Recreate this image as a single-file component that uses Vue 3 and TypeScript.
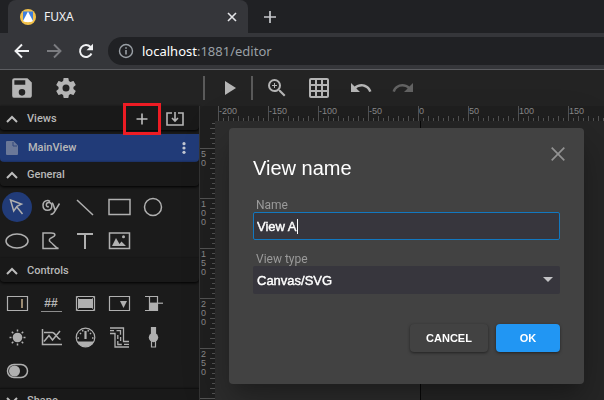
<script setup lang="ts">
import { computed, onBeforeUnmount, onMounted, ref } from 'vue'

interface Tick { pos: number; size: number; label?: string }

const viewName = ref('View A')
const viewType = ref('Canvas/SVG')
const width = ref(window.innerWidth)
const height = ref(window.innerHeight)

function measure(): void {
  width.value = window.innerWidth
  height.value = window.innerHeight
}
onMounted(() => window.addEventListener('resize', measure))
onBeforeUnmount(() => window.removeEventListener('resize', measure))

// One tick every 5 units, a labelled one every 50 where the label has room.
function makeTicks(start: number, firstValue: number, firstIndex: number, length: number): Tick[] {
  const ticks: Tick[] = []
  for (let i = firstIndex; start + i * 5 < length; i++) {
    const major = i % 10 === 0
    const pos = start + i * 5
    ticks.push({
      pos,
      size: major ? 15 : i % 2 === 0 ? 5 : 3,
      label: major && pos + 28 < length ? String(firstValue + i * 5) : undefined,
    })
  }
  return ticks
}

const xTicks = computed(() => makeTicks(18, -200, 0, width.value - 200))
const yTicks = computed(() => makeTicks(27, 50, -5, height.value - 121))
</script>

<template>
  <div class="window">
    <header class="browser">
      <div class="tabs">
        <div class="tab">
          <svg class="favicon" viewBox="0 0 16 16"><circle cx="8" cy="8" r="8" fill="#f2c14a" /><path d="M3 2.5h10v9.5H3z" fill="#3f7fdc" /><path d="M8 2.5 13 12c-2 1.600-8 1.600-10 0z" fill="#fff" /></svg>
          <span class="tab-title">FUXA</span>
          <button class="bare" aria-label="Close tab"><svg width="10" height="10" viewBox="0 0 10 10"><path d="M1 1l8 8M9 1L1 9" stroke="#e4e5e8" stroke-width="1.600" /></svg></button>
        </div>
        <button class="bare new-tab" aria-label="New tab"><svg width="12" height="12" viewBox="0 0 12 12"><path d="M6 0v12M0 6h12" stroke="#c6c8cc" stroke-width="1.700" /></svg></button>
      </div>
      <div class="nav">
        <button class="bare" aria-label="Back"><svg width="16" height="16" viewBox="0 0 16 16"><path d="M15 8H2M8 1.500 1.500 8 8 14.500" fill="none" stroke="#f0f1f3" stroke-width="1.900" /></svg></button>
        <button class="bare" aria-label="Forward"><svg width="16" height="16" viewBox="0 0 16 16"><path d="M1 8h13M8 1.500 14.500 8 8 14.500" fill="none" stroke="#7b7c80" stroke-width="1.900" /></svg></button>
        <button class="bare" aria-label="Reload"><svg width="16" height="16" viewBox="0 0 16 16"><path d="M13.500 10.500A6 6 0 1 1 12.500 4" fill="none" stroke="#f0f1f3" stroke-width="1.900" /><path d="M15 .8v6.500H8.500z" fill="#f0f1f3" /></svg></button>
        <div class="omnibox">
          <svg width="16" height="16" viewBox="0 0 16 16"><circle cx="8" cy="8" r="6.500" fill="none" stroke="#9aa0a6" stroke-width="1.400" /><path d="M8 7v4.500M8 4.200v1.600" stroke="#9aa0a6" stroke-width="1.600" /></svg>
          <span class="url"><b>localhost</b>:1881/editor</span>
        </div>
      </div>
    </header>

    <div class="toolbar">
      <div class="file-actions">
        <button class="bare" aria-label="Save"><svg class="big" viewBox="1 1 22 22"><path d="M17 3H5a2 2 0 0 0-2 2v14a2 2 0 0 0 2 2h14c1.100 0 2-.9 2-2V7l-4-4zm-5 16a3 3 0 1 1 0-6 3 3 0 0 1 0 6zm3-10H5V5h10v4z" /></svg></button>
        <button class="bare" aria-label="Settings"><svg class="big" viewBox="0 0 24 24"><path d="M19.430 12.980c.04-.32.07-.64.07-.98s-.03-.66-.07-.98l2.110-1.650c.19-.15.24-.42.120-.64l-2-3.460c-.12-.22-.39-.3-.61-.22l-2.490 1c-.52-.4-1.080-.73-1.690-.98l-.38-2.650A.49.49 0 0 0 14 2h-4c-.25 0-.46.18-.49.42l-.38 2.650c-.61.25-1.170.59-1.690.98l-2.490-1c-.23-.09-.49 0-.61.22l-2 3.460c-.13.22-.07.49.12.64l2.110 1.650c-.04.32-.07.65-.07.98s.03.66.07.98l-2.110 1.650c-.19.15-.24.42-.12.64l2 3.460c.12.22.39.3.61.22l2.490-1c.52.4 1.080.73 1.690.98l.38 2.650c.03.24.24.42.49.42h4c.25 0 .46-.18.49-.42l.38-2.650c.61-.25 1.170-.59 1.690-.98l2.490 1c.23.09.49 0 .61-.22l2-3.460c.12-.22.07-.49-.12-.64l-2.110-1.650zM12 15.500a3.500 3.500 0 1 1 0-7 3.500 3.500 0 0 1 0 7z" /></svg></button>
      </div>
      <i class="divider"></i>
      <button class="bare play" aria-label="Launch"><svg class="big" viewBox="0 0 24 24"><path d="M8 5v14l11-7z" /></svg></button>
      <i class="divider"></i>
      <div class="edit-actions">
        <button class="bare" aria-label="Zoom"><svg class="big" viewBox="0 0 24 24"><path d="M15.500 14h-.79l-.28-.27A6.470 6.470 0 0 0 16 9.500 6.500 6.500 0 1 0 9.500 16c1.610 0 3.090-.59 4.230-1.570l.27.28v.79l5 4.990L20.490 19l-4.990-5zm-6 0a4.500 4.500 0 1 1 0-9 4.500 4.500 0 0 1 0 9zm2.500-4h-2v2H9v-2H7V9h2V7h1v2h2v1z" /></svg></button>
        <button class="bare" aria-label="Grid"><svg class="big" viewBox="0 0 24 24"><path d="M20 2H4a2 2 0 0 0-2 2v16c0 1.100.9 2 2 2h16c1.100 0 2-.9 2-2V4a2 2 0 0 0-2-2zM8 20H4v-4h4v4zm0-6H4v-4h4v4zm0-6H4V4h4v4zm6 12h-4v-4h4v4zm0-6h-4v-4h4v4zm0-6h-4V4h4v4zm6 12h-4v-4h4v4zm0-6h-4v-4h4v4zm0-6h-4V4h4v4z" /></svg></button>
        <button class="bare" aria-label="Undo"><svg class="big" viewBox="0 0 24 24"><path d="M12.500 8c-2.650 0-5.050.99-6.900 2.600L2 7v9h9l-3.620-3.620c1.390-1.160 3.160-1.880 5.120-1.880 3.540 0 6.550 2.310 7.600 5.500l2.370-.78C21.080 11.030 17.150 8 12.500 8z" /></svg></button>
        <button class="bare faded" aria-label="Redo"><svg class="big" viewBox="0 0 24 24"><path d="M18.400 10.600C16.550 8.990 14.150 8 11.500 8c-4.650 0-8.580 3.030-9.960 7.220L3.900 16a8 8 0 0 1 7.600-5.500c1.950 0 3.730.72 5.120 1.880L13 16h9V7l-3.600 3.600z" /></svg></button>
      </div>
    </div>

    <div class="workspace">
      <aside class="sidebar">
        <div class="section">
          <svg class="chevron" viewBox="0 0 12 8"><path d="M1 7l5-5 5 5" /></svg>
          <span>Views</span>
          <div class="section-actions">
            <button class="bare add-view" aria-label="Add view"><svg width="12" height="12" viewBox="0 0 12 12"><path d="M6 .5v11M.5 6h11" stroke="#bdbdbd" stroke-width="1.600" /></svg></button>
            <button class="bare" aria-label="Import view"><svg width="18" height="14" viewBox="0 0 18 14"><path d="M6 1H1v12h16V1h-5M9 0v8M6 6l3 3 3-3" fill="none" stroke="#b5b5b5" stroke-width="1.600" /></svg></button>
          </div>
        </div>
        <div class="view-row">
          <svg width="12" height="14" viewBox="0 0 12 14"><path d="M1 0h6.500L12 4.500V13a1 1 0 0 1-1 1H1a1 1 0 0 1-1-1V1a1 1 0 0 1 1-1z" fill="#6b7898" /><path d="M7 1v4h4" fill="none" stroke="#32477a" /></svg>
          <span>MainView</span>
          <button class="bare more" aria-label="View menu"><svg width="4" height="12" viewBox="0 0 4 12"><circle cx="2" cy="1.700" r="1.600" /><circle cx="2" cy="6" r="1.600" /><circle cx="2" cy="10.300" r="1.600" /></svg></button>
        </div>

        <div class="section">
          <svg class="chevron" viewBox="0 0 12 8"><path d="M1 7l5-5 5 5" /></svg>
          <span>General</span>
        </div>
        <div class="tools">
          <button class="bare" aria-label="Select"><svg viewBox="0 0 34 34"><circle cx="17" cy="17" r="15" fill="#213b78" stroke="none" /><path d="M10.500 10l11 4-4.500 2.300L13.700 21zM16.500 16.500l6 7.500" /></svg></button>
          <button class="bare" aria-label="Pencil"><svg viewBox="0 0 34 34"><path d="M16 11.500c-2-2-7-1-7 3.700 0 3 1.500 5 4.500 5s4.300-2 4.300-4.200-1-3.500-3-3.500-2.500 1.500-2.500 2.500 1 2.300 2.500 1.500M18 13c1.500 0 2 5 3 6.500M25.500 13.500L20 22.500c-.8 1.200-2 2-3.500 2" /></svg></button>
          <button class="bare" aria-label="Line"><svg viewBox="0 0 34 34"><path d="M9 10l16 15" /></svg></button>
          <button class="bare" aria-label="Rectangle"><svg viewBox="0 0 34 34"><path d="M7 9.500h21v15H7z" /></svg></button>
          <button class="bare" aria-label="Circle"><svg viewBox="0 0 34 34"><circle cx="17" cy="17" r="8.500" /></svg></button>
          <button class="bare" aria-label="Ellipse"><svg viewBox="0 0 34 34"><ellipse cx="17" cy="17" rx="11" ry="7" /></svg></button>
          <button class="bare" aria-label="Path"><svg viewBox="0 0 34 34"><path d="M9 9h8c5 0 5 3 1 4.500-3 1.200-3.500 3-1.500 4.500 3 2 4 5 8 6.500H9z" /></svg></button>
          <button class="bare" aria-label="Text"><svg viewBox="0 0 34 34"><path d="M9 10h16M17 10v15" stroke-width="2" /></svg></button>
          <button class="bare" aria-label="Image"><svg viewBox="0 0 34 34"><path d="M7.500 9h20v15.500h-20z" /><path d="M10 22l4-8 3.500 6 2-2.500L24 22z" fill="#b0b0b0" stroke="none" /><circle cx="21.500" cy="12.800" r="1.500" fill="#b0b0b0" stroke="none" /></svg></button>
        </div>

        <div class="section">
          <svg class="chevron" viewBox="0 0 12 8"><path d="M1 7l5-5 5 5" /></svg>
          <span>Controls</span>
        </div>
        <div class="tools">
          <button class="bare" aria-label="Input"><svg viewBox="0 0 34 34"><path d="M7.500 10.500h20v14h-20z" stroke-width="1.200" /><path d="M22 13v9" stroke="#c9b291" /></svg></button>
          <button class="bare output" aria-label="Output"><span>##</span></button>
          <button class="bare" aria-label="Button"><svg viewBox="0 0 34 34"><path d="M8.500 10.500h18v14h-18z" stroke-width="1.200" /><path d="M8.500 10.500l3 3M26.500 10.500l-3 3M8.500 24.500l3-3M26.500 24.500l-3-3" stroke-width="1" stroke="#777" /><path d="M10 13h15v9H10z" fill="#b0b0b0" stroke="none" /></svg></button>
          <button class="bare" aria-label="Select box"><svg viewBox="0 0 34 34"><path d="M7.500 10.500h20v14h-20z" stroke-width="1.200" /><path d="M18 15h7l-3.500 7z" fill="#b0b0b0" stroke="none" /></svg></button>
          <button class="bare" aria-label="Progress"><svg viewBox="0 0 34 34"><path d="M9 10.500h12.500v14H9M13.500 10.500v14" stroke-width="1.200" /><path d="M13 17h9v7h-9z" fill="#b0b0b0" stroke="none" /><path d="M13 17.200h14" stroke-width="1.200" /></svg></button>
          <button class="bare" aria-label="Lamp"><svg viewBox="0 0 34 34"><circle cx="17.500" cy="17.500" r="4.800" fill="#b0b0b0" stroke="none" /><path d="M17.500 9.500v2M17.500 23.500v2M9.500 17.500h2M23.500 17.500h2M11.800 11.800l1.500 1.500M21.700 21.700l1.500 1.500M23.200 11.800l-1.500 1.500M11.800 23.200l1.500-1.500" /></svg></button>
          <button class="bare" aria-label="Chart"><svg viewBox="0 0 34 34"><path d="M8.500 9v15.500H28M10 21.500l5-6 3.500 4.500L26 11M10 12.500h8.500c2.500 0 4.500 6 8 7" /></svg></button>
          <button class="bare" aria-label="Gauge"><svg viewBox="0 0 34 34"><circle cx="17.500" cy="17.500" r="9.300" stroke-width="1.200" /><path d="M9 21.500h17a9.500 9.500 0 0 1-17 0z" fill="#b0b0b0" stroke="none" /><path d="M17.500 11v8" stroke-width="2.200" /><path d="M11 18H9.500M24 18h1.500M12 13l1 1M23 13l-1 1M14.500 10l.5 1.500M20.500 10l-.5 1.500" /></svg></button>
          <button class="bare" aria-label="Pipe"><svg viewBox="0 0 34 34"><path d="M8 8h13.500v13.500H27M8 13.500h5V27h14M8 10.700h4M14.500 10.700h4v4M15.800 15v4M18.600 17v4M15.800 21v3.500h4M22 24.300h5" stroke-width="1.300" /></svg></button>
          <button class="bare" aria-label="Slider"><svg viewBox="0 0 34 34"><path d="M15.500 7.500h4V27h-4z" stroke-width="1.200" /><path d="M15.500 7.500h4V15h-4z" fill="#b0b0b0" stroke="none" /><circle cx="17.500" cy="17.500" r="4.700" fill="#b0b0b0" stroke="none" /></svg></button>
          <button class="bare" aria-label="Switch"><svg viewBox="0 0 34 34"><rect x="7.500" y="10.500" width="20" height="13" rx="6.500" /><circle cx="14.500" cy="17" r="5.500" fill="#b0b0b0" stroke="none" /></svg></button>
        </div>

        <div class="section last">
          <svg class="chevron" viewBox="0 0 12 8"><path d="M1 1l5 5 5-5" /></svg>
          <span>Shape</span>
        </div>
      </aside>

      <main class="editor">
        <svg class="ruler-x">
          <g v-for="t in xTicks" :key="t.pos">
            <rect :x="t.pos" :y="15 - t.size" width="1" :height="t.size" />
            <text v-if="t.label" :x="t.pos + 1" y="8">{{ t.label }}</text>
          </g>
        </svg>
        <div class="stage">
          <svg class="ruler-y">
            <g v-for="t in yTicks" :key="t.pos">
              <rect :x="15 - t.size" :y="t.pos" :width="t.size" height="1" />
              <template v-if="t.label">
                <text v-for="(d, i) in t.label.split('')" :key="i" x="1" :y="t.pos + 9 + i * 9">{{ d }}</text>
              </template>
            </g>
          </svg>
          <div class="canvas"></div>
          <div class="beyond"></div>
        </div>
      </main>
    </div>

    <div class="overlay">
      <form class="dialog" role="dialog" aria-labelledby="dialog-title" @submit.prevent>
        <div class="dialog-head">
          <h1 id="dialog-title">View name</h1>
          <button type="button" class="bare close" aria-label="Close"><svg width="14" height="14" viewBox="0 0 14 14"><path d="M.7.7l12.600 12.600M13.300.7L.7 13.300" stroke="#929292" stroke-width="1.700" /></svg></button>
        </div>
        <div class="field">
          <label for="view-name">Name</label>
          <div class="name-box"><input id="view-name" v-model="viewName" type="text" size="5" autocomplete="off" /></div>
        </div>
        <div class="field">
          <label for="view-type">View type</label>
          <div class="select-box">
            <select id="view-type" v-model="viewType"><option>Canvas/SVG</option></select>
          </div>
        </div>
        <div class="dialog-actions">
          <button type="button" class="btn cancel">CANCEL</button>
          <button type="submit" class="btn ok">OK</button>
        </div>
      </form>
    </div>
  </div>
</template>

<style>
body { margin: 0; overflow: hidden; background: #1b1b1b; }
</style>

<style scoped>
*, *::after { box-sizing: border-box; }
svg { display: block; flex: none; }
.window { height: 100vh; display: flex; flex-direction: column; overflow: hidden; font-family: Roboto, "Liberation Sans", sans-serif; }
.bare { display: flex; align-items: center; justify-content: center; padding: 0; border: 0; background: none; color: inherit; }

.browser { flex: none; background: #35363a; border-bottom: 1px solid #5c5d61; font-family: "Noto Sans", sans-serif; }
.tabs { display: flex; height: 33px; padding-left: 8px; background: #202124; }
.tab { display: flex; align-items: center; gap: 8px; width: 240px; padding: 0 11px 0 12px; border-radius: 8px 8px 0 0; background: #35363a; }
.favicon { width: 16px; height: 16px; }
.tab-title { flex: 1; color: #f1f2f4; font-size: 12px; line-height: 16px; }
.new-tab { margin-left: 16px; }
.nav { display: flex; align-items: center; gap: 16px; height: 36px; padding-left: 14px; }
.omnibox { flex: 1; display: flex; align-items: center; gap: 8px; height: 28px; margin-left: -2px; padding-left: 10px; border-radius: 14px 0 0 14px; background: #202124; }
.url { color: #9aa0a6; font-size: 13px; line-height: 20px; white-space: nowrap; }
.url b { color: #fff; font-weight: 400; }

.toolbar { flex: none; display: flex; align-items: center; height: 36px; background: #232323; color: #b5b5b5; }
.big { width: 24px; height: 24px; fill: currentColor; }
.file-actions { display: flex; gap: 20px; width: 203px; padding-left: 10px; }
.divider { width: 2px; height: 24px; background: #5a5a5a; }
.play { margin: 0 10px 0 12px; }
.edit-actions { display: flex; gap: 18px; padding-left: 12px; }
.faded { color: #626262; }

.workspace { flex: 1; display: flex; min-height: 0; background: #1b1b1b; }
.sidebar { flex: none; width: 199px; color: #b8b8b8; font-size: 11px; font-weight: 500; }
.section { display: flex; align-items: center; gap: 9px; height: 24px; padding: 1px 0 0 6px; border-radius: 0 0 4px 4px; background: #191919; box-shadow: 0 1px 3px #000; }
.section span, .view-row span { line-height: 16px; }
.chevron { width: 12px; height: 8px; fill: none; stroke: #bdbdbd; stroke-width: 2; }
.section-actions { display: flex; gap: 18px; margin-left: auto; padding-right: 15px; }
.add-view { position: relative; width: 12px; }
.add-view::after { content: ""; position: absolute; top: 50%; left: 50%; width: 38px; height: 32px; transform: translate(-50%, -50%); border: 3px solid #ed1c24; }
.view-row { display: flex; align-items: center; gap: 10px; height: 28px; margin-top: 4px; padding: 0 13px 0 6px; border-radius: 0 0 4px 4px; background: #213b78; }
.more { margin-left: auto; fill: #c2c7d2; }
.tools { display: grid; grid-template-columns: repeat(5, 34px); grid-auto-rows: 34px; padding-top: 4px; }
.tools svg { width: 34px; height: 34px; fill: none; stroke: #b0b0b0; stroke-width: 1.5; }
.output span { width: 21px; height: 17px; border-bottom: 1px solid #8d8d8d; color: #b8b8b8; font: 700 12px/16px "Liberation Sans", sans-serif; text-align: center; }
.last { border-top: 1px solid #111; }

.editor { flex: 1; display: flex; flex-direction: column; min-width: 0; border-left: 1px solid #343434; background: #1f1f1f; }
.ruler-x { width: 100%; height: 15px; }
.ruler-y { width: 15px; height: 100%; }
.ruler-x rect, .ruler-y rect { fill: #535353; }
.ruler-x text, .ruler-y text { fill: #8a8a8a; font: 9px "Liberation Sans", sans-serif; }
.stage { flex: 1; display: flex; min-height: 0; }
.canvas { width: 206px; border-right: 1px solid #080808; background: #2d2d2d; }
.beyond { flex: 1; background: #262626; }

.overlay { position: fixed; inset: 0; display: flex; align-items: flex-start; padding: 128px 20px 0 229px; font-family: "Liberation Sans", sans-serif; pointer-events: none; }
.dialog { flex: 1; pointer-events: auto; padding: 14px 24px 32px; border-radius: 4px; background: #424242; box-shadow: 0 11px 15px -7px rgba(0, 0, 0, .2), 0 24px 38px 3px rgba(0, 0, 0, .14), 0 9px 46px 8px rgba(0, 0, 0, .12); }
.dialog-head { display: flex; align-items: flex-start; justify-content: space-between; padding-bottom: 16px; }
h1 { margin: 12px 0 0; color: #fff; font-size: 20px; font-weight: 400; line-height: 28px; }
.close { width: 24px; height: 24px; margin-right: -10px; }
.field { margin-bottom: 12px; }
label { display: block; padding-left: 3px; color: #9a9a9a; font-family: Roboto, sans-serif; font-size: 12px; line-height: 14px; }
.name-box { display: flex; align-items: center; height: 28px; padding-left: 3px; border: 1px solid #1278c0; border-radius: 2px; background: #37363d; }
.name-box::after { content: ""; width: 1px; height: 15px; background: #fff; }
input, select { padding: 0; border: 0; outline: 0; background: none; color: #fff; font: 13px "Liberation Sans", sans-serif; -webkit-text-stroke: 0.4px #fff; }
input { field-sizing: content; }
.select-box { position: relative; height: 28px; border-radius: 2px; background: #37363d; }
.select-box::after { content: ""; position: absolute; top: 11px; right: 7px; border: 5px solid transparent; border-top-color: #c3c3c6; border-bottom: 0; pointer-events: none; }
select { width: 100%; height: 28px; padding: 0 24px 0 4px; appearance: none; }
.dialog-actions { display: flex; justify-content: flex-end; gap: 8px; padding-top: 18px; }
.btn { height: 28px; padding: 0 16px; border: 0; border-radius: 4px; color: #fff; font: 700 11px "Liberation Sans", sans-serif; box-shadow: 0 1px 3px rgba(0, 0, 0, .5); }
.cancel { min-width: 78px; background: #424242; }
.ok { min-width: 64px; background: #2196f3; }
</style>
